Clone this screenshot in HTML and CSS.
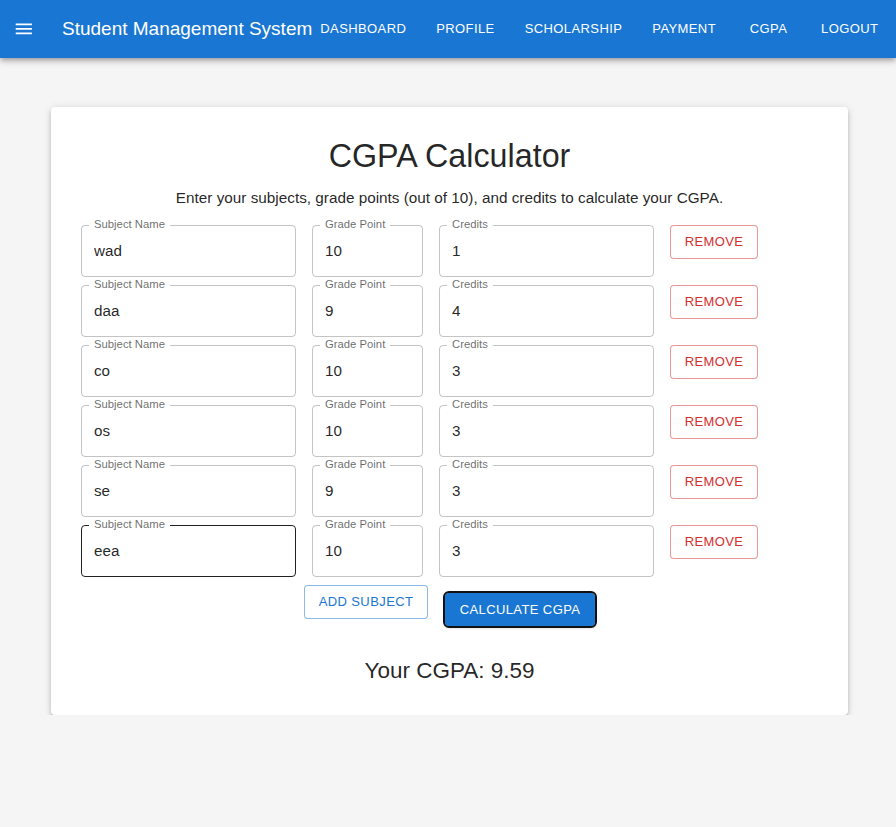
FILE: index.html
```html
<!DOCTYPE html>
<html lang="en">
<head>
<meta charset="utf-8">
<title>Student Management System</title>
<link rel="stylesheet" href="styles.css">
</head>
<body>
<header class="appbar">
  <button class="menu-btn" aria-label="menu">
    <svg viewBox="0 0 24 24" width="21.6" height="21.6" fill="currentColor"><path d="M3 18h18v-2H3v2zm0-5h18v-2H3v2zm0-7v2h18V6H3z"/></svg>
  </button>
  <div class="brand">Student Management System</div>
  <nav class="nav">
    <a class="nav-link" href="#">Dashboard</a>
    <a class="nav-link" href="#">Profile</a>
    <a class="nav-link" href="#">Scholarship</a>
    <a class="nav-link" href="#">Payment</a>
    <a class="nav-link" href="#">CGPA</a>
    <a class="nav-link" href="#">Logout</a>
  </nav>
</header>
<main class="page">
  <section class="card">
    <h1 class="title">CGPA Calculator</h1>
    <p class="subtitle">Enter your subjects, grade points (out of 10), and credits to calculate your CGPA.</p>
    <div class="rows">
      <div class="row">
        <div class="field field-name"><span class="field-label">Subject Name</span><input class="field-input" value="wad"></div>
        <div class="field field-grade"><span class="field-label">Grade Point</span><input class="field-input" value="10"></div>
        <div class="field field-credits"><span class="field-label">Credits</span><input class="field-input" value="1"></div>
        <button class="btn btn-remove">Remove</button>
      </div>
      <div class="row">
        <div class="field field-name"><span class="field-label">Subject Name</span><input class="field-input" value="daa"></div>
        <div class="field field-grade"><span class="field-label">Grade Point</span><input class="field-input" value="9"></div>
        <div class="field field-credits"><span class="field-label">Credits</span><input class="field-input" value="4"></div>
        <button class="btn btn-remove">Remove</button>
      </div>
      <div class="row">
        <div class="field field-name"><span class="field-label">Subject Name</span><input class="field-input" value="co"></div>
        <div class="field field-grade"><span class="field-label">Grade Point</span><input class="field-input" value="10"></div>
        <div class="field field-credits"><span class="field-label">Credits</span><input class="field-input" value="3"></div>
        <button class="btn btn-remove">Remove</button>
      </div>
      <div class="row">
        <div class="field field-name"><span class="field-label">Subject Name</span><input class="field-input" value="os"></div>
        <div class="field field-grade"><span class="field-label">Grade Point</span><input class="field-input" value="10"></div>
        <div class="field field-credits"><span class="field-label">Credits</span><input class="field-input" value="3"></div>
        <button class="btn btn-remove">Remove</button>
      </div>
      <div class="row">
        <div class="field field-name"><span class="field-label">Subject Name</span><input class="field-input" value="se"></div>
        <div class="field field-grade"><span class="field-label">Grade Point</span><input class="field-input" value="9"></div>
        <div class="field field-credits"><span class="field-label">Credits</span><input class="field-input" value="3"></div>
        <button class="btn btn-remove">Remove</button>
      </div>
      <div class="row">
        <div class="field field-name is-focused"><span class="field-label">Subject Name</span><input class="field-input" value="eea"></div>
        <div class="field field-grade"><span class="field-label">Grade Point</span><input class="field-input" value="10"></div>
        <div class="field field-credits"><span class="field-label">Credits</span><input class="field-input" value="3"></div>
        <button class="btn btn-remove">Remove</button>
      </div>
    </div>
    <div class="actions">
      <button class="btn btn-add">Add Subject</button>
      <button class="btn btn-calc">Calculate CGPA</button>
    </div>
    <p class="result">Your CGPA: 9.59</p>
  </section>
</main>
</body>
</html>
```
FILE: styles.css
```css
* { box-sizing: border-box; }

body {
  margin: 0;
  background: #f5f5f5;
  font-family: "Liberation Sans", Arial, sans-serif;
  color: rgba(0, 0, 0, 0.87);
}

.appbar {
  height: 58px;
  background: #1976d2;
  color: #fff;
  display: flex;
  align-items: center;
  box-shadow: 0 2px 4px -1px rgba(0,0,0,0.2), 0 4px 5px 0 rgba(0,0,0,0.14), 0 1px 10px 0 rgba(0,0,0,0.12);
}

.menu-btn {
  display: flex;
  width: 21.6px;
  height: 21.6px;
  margin: 0 27.4px 0 13px;
  padding: 0;
  border: 0;
  background: none;
  color: #fff;
}

.brand {
  font-size: 19px;
  line-height: 1.6;
  white-space: nowrap;
}

.nav {
  display: flex;
  gap: 14px;
}

.nav-link {
  min-width: 61px;
  padding: 0 8px;
  color: #fff;
  text-decoration: none;
  text-transform: uppercase;
  text-align: center;
  font-size: 13px;
  letter-spacing: 0.4px;
  line-height: 22px;
  white-space: nowrap;
}

.page {
  padding: 49px 48px 0 51px;
}

.card {
  background: #fff;
  border-radius: 4px;
  padding: 30px;
  box-shadow: 0 3px 3px -2px rgba(0,0,0,0.25), 0 3px 4px 0 rgba(0,0,0,0.16), 0 1px 8px 0 rgba(0,0,0,0.12);
}

.title {
  margin: 0 0 11px;
  font-size: 32.3px;
  line-height: 39px;
  font-weight: 400;
  text-align: center;
}

.subtitle {
  margin: 0 0 15.5px;
  font-size: 15.3px;
  line-height: 22.5px;
  text-align: center;
}

.rows {
  display: flex;
  flex-direction: column;
  gap: 8px;
}

.row {
  display: flex;
  align-items: flex-start;
  gap: 16px;
}

.field {
  position: relative;
  height: 52px;
  border: 1px solid rgba(0, 0, 0, 0.23);
  border-radius: 4px;
}

.field.is-focused {
  border-color: rgba(0, 0, 0, 0.87);
}

.field-name, .field-credits { width: 215px; }
.field-grade { width: 111px; }

.field-label {
  position: absolute;
  top: -8px;
  left: 7px;
  padding: 0 5px;
  background: #fff;
  font-size: 11.3px;
  line-height: 13px;
  color: rgba(0, 0, 0, 0.6);
  white-space: nowrap;
}

.field-input {
  display: block;
  width: 100%;
  height: 100%;
  padding: 0 12px 2px;
  border: 0;
  outline: 0;
  background: transparent;
  font-family: "Liberation Sans", Arial, sans-serif;
  font-size: 15.2px;
  color: rgba(0, 0, 0, 0.87);
}

.btn {
  height: 34px;
  padding: 0 14px;
  border-radius: 4px;
  font-family: "Liberation Sans", Arial, sans-serif;
  font-size: 13px;
  letter-spacing: 0.4px;
  text-transform: uppercase;
  background: #fff;
  cursor: pointer;
  white-space: nowrap;
}

.btn-remove {
  width: 88px;
  padding: 0 0 2px;
  border: 1px solid rgba(211, 47, 47, 0.5);
  color: #d32f2f;
}

.actions {
  display: flex;
  justify-content: center;
  align-items: flex-start;
  gap: 17px;
  margin-top: 8px;
}

.btn-add {
  width: 124px;
  padding: 0 0 2px;
  border: 1px solid rgba(25, 118, 210, 0.5);
  color: #1976d2;
}

.btn-calc {
  width: 150px;
  height: 33px;
  padding: 0;
  margin-top: 8px;
  border: 0;
  background: #1976d2;
  color: #fff;
  outline: 2px solid #111;
  outline-offset: 0;
  box-shadow: 0 3px 1px -2px rgba(0,0,0,0.2), 0 2px 2px 0 rgba(0,0,0,0.14), 0 1px 5px 0 rgba(0,0,0,0.12);
}

.result {
  margin: 30px 0 0;
  font-size: 22.5px;
  line-height: 29px;
  text-align: center;
}
```
